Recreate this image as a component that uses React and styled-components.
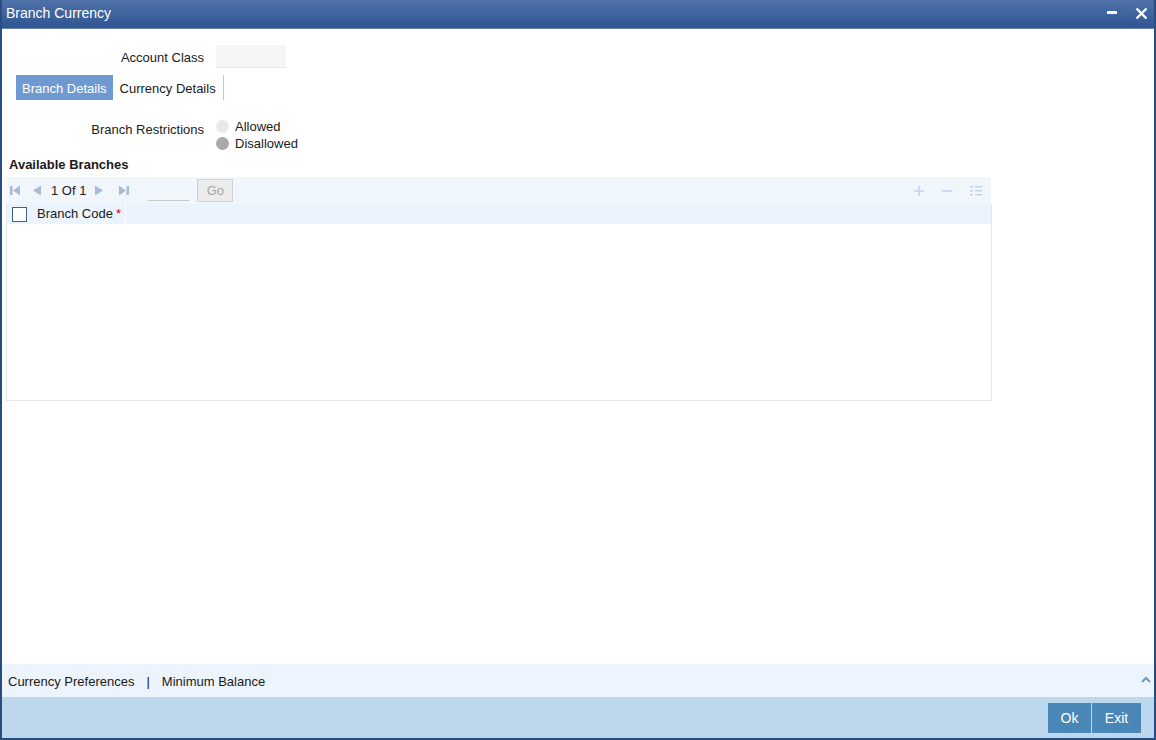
import React from "react";
import styled, { createGlobalStyle } from "styled-components";

const Global = createGlobalStyle`
  html, body { margin: 0; padding: 0; }
  body { font-family: Arial, "Liberation Sans", sans-serif; font-size: 13px; color: #1a1a1a; background: #fff; }
`;

const Window = styled.div`
  width: 1156px;
  height: 740px;
  box-sizing: border-box;
  border: 2px solid #2a4d80;
  border-top: none;
  display: flex;
  flex-direction: column;
  overflow: hidden;
`;

const TitleBar = styled.div`
  height: 28px;
  margin: 0 -2px;
  background: linear-gradient(#4e72a8, #2f5593);
  border-bottom: 1px solid #6d87ad;
  display: flex;
  align-items: center;
  padding: 0 8px 0 6px;
  color: #fff;
  font-size: 14px;
  flex-shrink: 0;
`;

const Title = styled.div`
  flex: 1;
  margin-top: -3px;
`;

const WinButtons = styled.div`
  display: flex;
  gap: 17px;
  align-items: center;
  margin-top: -2px;
`;

const Body = styled.div`
  flex: 1;
  display: flex;
  flex-direction: column;
  min-height: 0;
`;

const Row = styled.div`
  display: flex;
  align-items: ${(p) => p.$align || "center"};
  margin-top: ${(p) => p.$mt || 0}px;
`;

const Label = styled.div`
  width: 202px;
  text-align: right;
  padding-right: 12px;
  padding-top: ${(p) => p.$pt || 0}px;
  font-size: 13px;
`;

const TextBox = styled.div`
  width: 70px;
  height: 22px;
  background: #f6f6f6;
  border-bottom: 1px solid #e6e6e6;
`;

const Tabs = styled.div`
  display: flex;
  margin-left: 14px;
  height: 25px;
  margin-top: 7px;
`;

const Tab = styled.div`
  display: flex;
  align-items: center;
  padding: 1px ${(p) => (p.$active ? "6px" : "7px")} 0 ${(p) => (p.$active ? "6px" : "7px")};
  font-size: 13px;
  background: ${(p) => (p.$active ? "#6e9ad1" : "transparent")};
  color: ${(p) => (p.$active ? "#fff" : "#1a1a1a")};
  border-right: ${(p) => (p.$active ? "none" : "1px solid #c8c8c8")};
`;

const RadioGroup = styled.div`
  display: flex;
  flex-direction: column;
  gap: 1px;
`;

const RadioItem = styled.div`
  display: flex;
  align-items: center;
  gap: 6px;
  height: 16px;
  font-size: 13px;
`;

const RadioDot = styled.span`
  width: 13px;
  height: 13px;
  border-radius: 50%;
  background: ${(p) => (p.$on ? "#a9a9a9" : "#e9e9e9")};
  display: inline-block;
`;

const SectionTitle = styled.div`
  font-weight: bold;
  font-size: 13px;
  margin: 6px 0 0 7px;
`;

const Grid = styled.div`
  margin: 5px 0 0 4px;
  width: 986px;
`;

const GridToolbar = styled.div`
  height: 27px;
  background: #f1f5fc;
  display: flex;
  align-items: center;
  padding-left: 3px;
  margin-left: 1px;
  width: 984px;
  box-sizing: border-box;
`;

const Pager = styled.div`
  display: flex;
  align-items: center;
  font-size: 13px;
  color: #222;
`;

const PageText = styled.span`
  margin: 0 8px 0 9px;
`;

const PageInput = styled.div`
  width: 41px;
  height: 20px;
  border-bottom: 1px solid #c9c9c9;
  margin-left: 19px;
  box-sizing: border-box;
`;

const GoButton = styled.div`
  width: 36px;
  height: 23px;
  border: 1px solid #cfd3d9;
  background: #ececec;
  color: #a5a5a5;
  font-size: 13px;
  display: flex;
  align-items: center;
  justify-content: center;
  margin-left: 8px;
  box-sizing: border-box;
`;

const ToolIcons = styled.div`
  margin-left: auto;
  display: flex;
  gap: 16px;
  align-items: center;
  padding-right: 8px;
`;

const GridBody = styled.div`
  height: 197px;
  border: 1px solid #e6e6ee;
  border-top: none;
  box-sizing: border-box;
`;

const HeaderRow = styled.div`
  height: 20px;
  background: #ebf3fd;
  display: flex;
  align-items: center;
`;

const CheckCell = styled.div`
  width: 30px;
  padding-left: 5px;
  box-sizing: border-box;
  display: flex;
`;

const CheckBox = styled.span`
  width: 13px;
  height: 13px;
  border: 1px solid #3d5f8c;
  background: #fff;
  display: inline-block;
`;

const HeaderCell = styled.div`
  height: 20px;
  display: flex;
  align-items: center;
  padding-bottom: 1px;
  box-sizing: border-box;
  width: 89px;
  white-space: nowrap;
  border-right: 1px solid #ffffff;
  font-size: 13px;
`;

const Req = styled.span`
  color: #d40000;
  margin-left: 3px;
`;

const Spacer = styled.div`
  flex: 1;
`;

const Footer = styled.div`
  height: 33px;
  background: #edf4fd;
  display: flex;
  align-items: center;
  padding: 1px 0 0 6px;
  box-sizing: border-box;
  font-size: 13px;
  position: relative;
  flex-shrink: 0;
`;

const Sep = styled.span`
  margin: 0 12px 0 12px;
`;

const Caret = styled.div`
  position: absolute;
  right: 3px;
  top: 7px;
`;

const ButtonBar = styled.div`
  height: 41px;
  background: #bdd7ec;
  display: flex;
  justify-content: flex-end;
  align-items: flex-start;
  padding: 6px 13px 0 0;
  gap: 1px;
  box-sizing: border-box;
  flex-shrink: 0;
`;

const ActionButton = styled.div`
  height: 30px;
  width: ${(p) => p.$w}px;
  background: #4b87b6;
  color: #fff;
  font-size: 14px;
  display: flex;
  align-items: center;
  justify-content: center;
`;

const navColor = "#a9bbd4";

export default function App() {
  return (
    <>
      <Global />
      <Window>
        <TitleBar>
          <Title>Branch Currency</Title>
          <WinButtons>
            <svg width="11" height="4" viewBox="0 0 11 4">
              <rect x="0" y="0" width="10" height="3" fill="#fff" />
            </svg>
            <svg width="13" height="13" viewBox="0 0 13 13">
              <path d="M1.5 1.5 L11.5 11.5 M11.5 1.5 L1.5 11.5" stroke="#fff" strokeWidth="2.4" />
            </svg>
          </WinButtons>
        </TitleBar>
        <Body>
          <Row $mt={16}>
            <Label $pt={2}>Account Class</Label>
            <TextBox />
          </Row>
          <Tabs>
            <Tab $active>Branch Details</Tab>
            <Tab>Currency Details</Tab>
          </Tabs>
          <Row $mt={18} $align="flex-start">
            <Label $pt={4}>Branch Restrictions</Label>
            <RadioGroup>
              <RadioItem>
                <RadioDot />
                Allowed
              </RadioItem>
              <RadioItem>
                <RadioDot $on />
                Disallowed
              </RadioItem>
            </RadioGroup>
          </Row>
          <SectionTitle>Available Branches</SectionTitle>
          <Grid>
            <GridToolbar>
              <Pager>
                <svg width="11" height="11" viewBox="0 0 11 11">
                  <rect x="0" y="1" width="2.5" height="9" fill={navColor} />
                  <path d="M10 0.5 L3 5.5 L10 10.5 Z" fill={navColor} />
                </svg>
                <svg width="10" height="11" viewBox="0 0 10 11" style={{ marginLeft: 11 }}>
                  <path d="M9 0.5 L1 5.5 L9 10.5 Z" fill={navColor} />
                </svg>
                <PageText>1 Of 1</PageText>
                <svg width="10" height="11" viewBox="0 0 10 11">
                  <path d="M1 0.5 L9 5.5 L1 10.5 Z" fill={navColor} />
                </svg>
                <svg width="11" height="11" viewBox="0 0 11 11" style={{ marginLeft: 14 }}>
                  <path d="M1 0.5 L8 5.5 L1 10.5 Z" fill={navColor} />
                  <rect x="8.5" y="1" width="2.5" height="9" fill={navColor} />
                </svg>
              </Pager>
              <PageInput />
              <GoButton>Go</GoButton>
              <ToolIcons>
                <svg width="12" height="12" viewBox="0 0 12 12">
                  <path d="M6 1 V11 M1 6 H11" stroke="#c6d3e6" strokeWidth="1.6" />
                </svg>
                <svg width="12" height="12" viewBox="0 0 12 12">
                  <path d="M1 6 H11" stroke="#c6d3e6" strokeWidth="1.6" />
                </svg>
                <svg width="14" height="12" viewBox="0 0 14 12">
                  <g fill="#c6d3e6">
                    <rect x="1" y="1" width="3" height="1.5" />
                    <rect x="6" y="1" width="7" height="1.5" />
                    <rect x="1" y="5" width="3" height="1.5" />
                    <rect x="6" y="5" width="7" height="1.5" />
                    <rect x="1" y="9" width="3" height="1.5" />
                    <rect x="6" y="9" width="7" height="1.5" />
                  </g>
                </svg>
              </ToolIcons>
            </GridToolbar>
            <GridBody>
              <HeaderRow>
                <CheckCell>
                  <CheckBox />
                </CheckCell>
                <HeaderCell>
                  Branch Code<Req>*</Req>
                </HeaderCell>
              </HeaderRow>
            </GridBody>
          </Grid>
          <Spacer />
          <Footer>
            Currency Preferences<Sep>|</Sep>Minimum Balance
            <Caret>
              <svg width="10" height="7" viewBox="0 0 10 7">
                <path d="M1 6 L5 2 L9 6" stroke="#6f95c4" strokeWidth="2" fill="none" />
              </svg>
            </Caret>
          </Footer>
          <ButtonBar>
            <ActionButton $w={43}>Ok</ActionButton>
            <ActionButton $w={49}>Exit</ActionButton>
          </ButtonBar>
        </Body>
      </Window>
    </>
  );
}
